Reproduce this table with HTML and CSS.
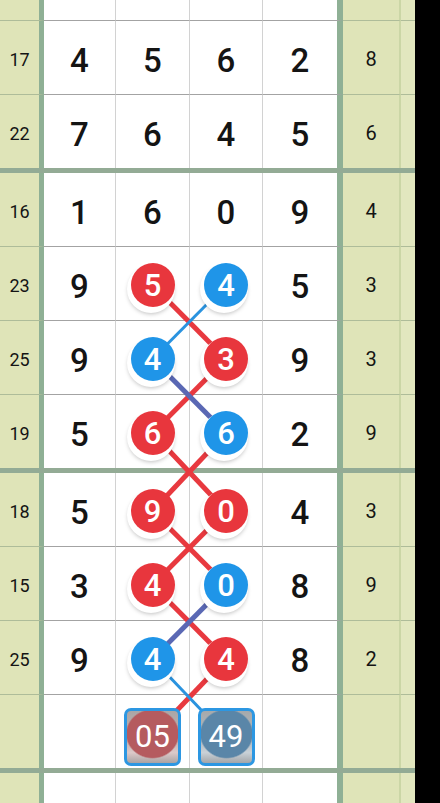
FILE: index.html
```html
<!DOCTYPE html>
<html lang="zh">
<head>
    <meta charset="UTF-8">
    <meta name="viewport" content="width=device-width, initial-scale=1.0">
    <title>走势图</title>
    <link rel="stylesheet" href="styles.css">
</head>
<body>
    <div class="board">
        <div class="group">
            <div class="row">
                <div class="idx"></div>
                <div class="cell"></div><div class="cell"></div><div class="cell"></div><div class="cell last"></div>
                <div class="sum"></div><div class="extra"></div>
            </div>
            <div class="row">
                <div class="idx"></div>
                <div class="cell"></div><div class="cell"></div><div class="cell"></div><div class="cell last"></div>
                <div class="sum"></div><div class="extra"></div>
            </div>
            <div class="row">
                <div class="idx">17</div>
                <div class="cell">4</div><div class="cell">5</div><div class="cell">6</div><div class="cell last">2</div>
                <div class="sum">8</div><div class="extra"></div>
            </div>
            <div class="row">
                <div class="idx">22</div>
                <div class="cell">7</div><div class="cell">6</div><div class="cell">4</div><div class="cell last">5</div>
                <div class="sum">6</div><div class="extra"></div>
            </div>
        </div>

        <div class="group">
            <div class="row">
                <div class="idx">16</div>
                <div class="cell">1</div><div class="cell">6</div><div class="cell">0</div><div class="cell last">9</div>
                <div class="sum">4</div><div class="extra"></div>
            </div>
            <div class="row">
                <div class="idx">23</div>
                <div class="cell">9</div>
                <div class="cell"><span class="ball red">5</span></div>
                <div class="cell"><span class="ball blue">4</span></div>
                <div class="cell last">5</div>
                <div class="sum">3</div><div class="extra"></div>
            </div>
            <div class="row">
                <div class="idx">25</div>
                <div class="cell">9</div>
                <div class="cell"><span class="ball blue">4</span></div>
                <div class="cell"><span class="ball red">3</span></div>
                <div class="cell last">9</div>
                <div class="sum">3</div><div class="extra"></div>
            </div>
            <div class="row">
                <div class="idx">19</div>
                <div class="cell">5</div>
                <div class="cell"><span class="ball red">6</span></div>
                <div class="cell"><span class="ball blue">6</span></div>
                <div class="cell last">2</div>
                <div class="sum">9</div><div class="extra"></div>
            </div>
        </div>

        <div class="group">
            <div class="row">
                <div class="idx">18</div>
                <div class="cell">5</div>
                <div class="cell"><span class="ball red">9</span></div>
                <div class="cell"><span class="ball red">0</span></div>
                <div class="cell last">4</div>
                <div class="sum">3</div><div class="extra"></div>
            </div>
            <div class="row">
                <div class="idx">15</div>
                <div class="cell">3</div>
                <div class="cell"><span class="ball red">4</span></div>
                <div class="cell"><span class="ball blue">0</span></div>
                <div class="cell last">8</div>
                <div class="sum">9</div><div class="extra"></div>
            </div>
            <div class="row">
                <div class="idx">25</div>
                <div class="cell">9</div>
                <div class="cell"><span class="ball blue">4</span></div>
                <div class="cell"><span class="ball red">4</span></div>
                <div class="cell last">8</div>
                <div class="sum">2</div><div class="extra"></div>
            </div>
            <div class="row">
                <div class="idx"></div>
                <div class="cell"></div>
                <div class="cell pick-cell"><span class="pick pick-red">05</span></div>
                <div class="cell pick-cell"><span class="pick pick-blue">49</span></div>
                <div class="cell last"></div>
                <div class="sum"></div><div class="extra"></div>
            </div>
        </div>

        <div class="group tail">
            <div class="row">
                <div class="idx"></div>
                <div class="cell"></div><div class="cell"></div><div class="cell"></div><div class="cell last"></div>
                <div class="sum"></div><div class="extra"></div>
            </div>
        </div>

        <!-- trend lines between the picked balls -->
        <svg class="links" width="415" height="870" viewBox="0 0 415 870">
            <g stroke-linecap="butt">
                <line x1="152.5" y1="412" x2="226" y2="486" stroke="#e8393f" stroke-width="5"/>
                <line x1="226" y1="486" x2="152.5" y2="560" stroke="#e8393f" stroke-width="5"/>
                <line x1="152.5" y1="560" x2="226" y2="638" stroke="#e8393f" stroke-width="5"/>
                <line x1="226" y1="560" x2="152.5" y2="638" stroke="#e8393f" stroke-width="5"/>
                <line x1="152.5" y1="638" x2="226" y2="712" stroke="#e8393f" stroke-width="5"/>
                <line x1="226" y1="638" x2="152.5" y2="712" stroke="#e8393f" stroke-width="5"/>
                <line x1="152.5" y1="712" x2="226" y2="786" stroke="#e8393f" stroke-width="5"/>
                <line x1="226" y1="786" x2="152.5" y2="863" stroke="#e8393f" stroke-width="5"/>
                <line x1="226" y1="412" x2="152.5" y2="486" stroke="#2a93df" stroke-width="3"/>
                <line x1="152.5" y1="486" x2="226" y2="560" stroke="#5a68b4" stroke-width="5"/>
                <line x1="226" y1="712" x2="152.5" y2="786" stroke="#5a68b4" stroke-width="5"/>
                <line x1="152.5" y1="786" x2="226" y2="863" stroke="#2a93df" stroke-width="3"/>
            </g>
        </svg>
    </div>
</body>
</html>
```

FILE: styles.css
```css
* {
    box-sizing: border-box;
}
body {
    margin: 0;
    background: #000;
    font-family: Roboto, "Noto Sans", sans-serif;
    color: #141414;
    overflow: hidden;
    height: 803px;
}
.board {
    position: relative;
    width: 415px;
    margin-top: -127px;
    background: #fff;
}
.group {
    border-bottom: 5px solid #93ab95;
}
.group.tail {
    border-bottom: none;
}
.row {
    display: grid;
    grid-template-columns: 44px 72px 74px 73px 80px 58px 14px;
    height: 74px;
}
.row:last-child {
    height: 73px;
}
.tail .row {
    height: 30px;
}
.row > div {
    display: flex;
    align-items: center;
    justify-content: center;
    border-bottom: 1px solid #a3a3a3;
}
.row:last-child > div {
    border-bottom: none;
}
.idx {
    background: #dfe4b8;
    border-right: 5px solid #8fb095;
    font-size: 18px;
    font-weight: 400;
    padding-top: 3px;
}
.row > .idx,
.row > .sum,
.row > .extra {
    border-bottom-color: #aebc99;
}
.cell {
    border-right: 1px solid #d2d2d2;
    font-size: 33px;
    font-weight: 500;
    padding-top: 6px;
}
.cell.last {
    border-right: 6px solid #8fb095;
}
.sum {
    background: #dfe4b8;
    border-right: 2px solid #cbd6a6;
    font-size: 20px;
    padding-top: 3px;
}
.extra {
    background: #e2e7bf;
}
.ball {
    position: relative;
    z-index: 2;
    width: 44px;
    height: 44px;
    margin-top: -3px;
    border-radius: 50%;
    display: flex;
    align-items: center;
    justify-content: center;
    color: #fff;
    font-size: 31px;
    font-weight: 500;
    box-shadow: -2px 4px 0 2px #fff, -2px 6px 4px 1px rgba(0, 0, 0, 0.25);
}
.red {
    background: #e8363d;
}
.blue {
    background: #1f95e8;
}
.row > .pick-cell {
    align-items: flex-end;
    padding: 0 0 2px 0;
}
.pick {
    position: relative;
    z-index: 2;
    width: 57px;
    height: 58px;
    border: 3px solid #2c97e2;
    border-radius: 7px;
    display: flex;
    align-items: center;
    justify-content: center;
    color: #fff;
    font-size: 31px;
    font-weight: 400;
    padding-bottom: 2px;
}
.pick-red {
    background: radial-gradient(ellipse 27px 25px at 50% 44%, #b55b5f 94%, transparent 100%),
        linear-gradient(#aba6a6, #c4b3b3 60%, #dcc9c9 80%, #a9a3a3);
}
.pick-blue {
    background: radial-gradient(ellipse 27px 25px at 50% 44%, #5a86a8 94%, transparent 100%),
        linear-gradient(#a6a9ab, #b3bcc3 60%, #c9d1d7 80%, #a3a6a9);
}
.links {
    position: absolute;
    top: 0;
    left: 0;
    z-index: 1;
    pointer-events: none;
}
```
